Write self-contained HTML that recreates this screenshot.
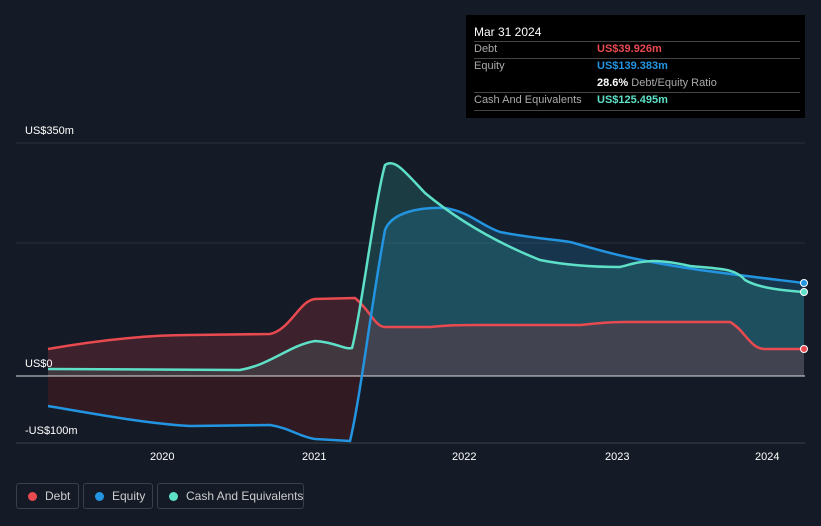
<!DOCTYPE html>
<html><head><style>
body{margin:0;background:#151b26;font-family:"Liberation Sans",sans-serif;width:821px;height:526px;overflow:hidden;position:relative}
.tt{position:absolute;left:466px;top:15px;width:339px;height:103px;background:#000;color:#fff;font-size:11px}
.tt .r{position:absolute;left:8px;width:326px;border-top:1px solid #444}
.lbl{color:#aaa}
.leg{position:absolute;top:483px;height:26px;border:1px solid #3a404a;border-radius:3px;color:#ccc;font-size:12px;line-height:24px;box-sizing:border-box;white-space:nowrap}
.leg i{position:absolute;top:8px;left:11px;width:9px;height:9px;border-radius:50%}
.ax{position:absolute;color:#fff;font-size:11px}
</style></head><body>
<svg width="821" height="526" style="position:absolute;left:0;top:0">
<defs>
<clipPath id="up"><rect x="0" y="0" width="821" height="376"/></clipPath>
<clipPath id="dn"><rect x="0" y="376" width="821" height="150"/></clipPath>
</defs>
<line x1="16" y1="143" x2="805" y2="143" stroke="#2c323c"/>
<line x1="16" y1="243" x2="805" y2="243" stroke="#2c323c"/>
<line x1="16" y1="443" x2="805" y2="443" stroke="#3a404a"/>
<g clip-path="url(#dn)">
<path d="M48,406 C100,415 150,424 190,426 L270,425 C290,428 300,437 315,439 L350,441 C360,400 372,300 385,230 L385,376 L48,376Z" fill="#3a1a22" fill-opacity="0.8"/>
</g>
<g clip-path="url(#up)">
<path d="M48,406 C100,415 150,424 190,426 L270,425 C290,428 300,437 315,439 L350,441 C360,400 372,300 385,230 C392,212 420,207 445,208 C470,212 480,225 500,232 C530,238 560,240 570,242 C600,250 620,258 700,270 C760,278 780,280 804,283 L804,376 L48,376Z" fill="#1e6a9a" fill-opacity="0.35"/>
</g>
<path d="M48,369 L240,370 C270,365 290,345 315,341 C335,342 345,350 352,348 C360,320 375,200 385,165 C395,158 405,172 425,193 C460,222 500,244 540,260 C570,266 600,267 620,267 C640,262 650,257 690,266 C720,269 735,268 745,280 C760,289 790,291 804,292 L804,376 L48,376Z" fill="#2a8a88" fill-opacity="0.3"/>
<path d="M48,349 C100,340 150,335 190,335 L270,334 C290,330 300,300 315,299 L355,298 C370,310 375,327 385,327 L430,327 C450,325 460,325 480,325 L580,325 C600,323 610,322 625,322 L730,322 C745,330 750,349 765,349 L804,349 L804,376 L48,376Z" fill="#8a2e3a" fill-opacity="0.35"/>
<line x1="16" y1="376" x2="805" y2="376" stroke="#ddd"/>
<path d="M48,349 C100,340 150,335 190,335 L270,334 C290,330 300,300 315,299 L355,298 C370,310 375,327 385,327 L430,327 C450,325 460,325 480,325 L580,325 C600,323 610,322 625,322 L730,322 C745,330 750,349 765,349 L804,349" fill="none" stroke="#e84a50" stroke-width="2.5"/>
<path d="M48,406 C100,415 150,424 190,426 L270,425 C290,428 300,437 315,439 L350,441 C360,400 372,300 385,230 C392,212 420,207 445,208 C470,212 480,225 500,232 C530,238 560,240 570,242 C600,250 620,258 700,270 C760,278 780,280 804,283" fill="none" stroke="#2394e0" stroke-width="2.5"/>
<path d="M48,369 L240,370 C270,365 290,345 315,341 C335,342 345,350 352,348 C360,320 375,200 385,165 C395,158 405,172 425,193 C460,222 500,244 540,260 C570,266 600,267 620,267 C640,262 650,257 690,266 C720,269 735,268 745,280 C760,289 790,291 804,292" fill="none" stroke="#5ee0c8" stroke-width="2.5"/>
<circle cx="804" cy="349" r="3.5" fill="#e84a50" stroke="#fff"/>
<circle cx="804" cy="283" r="3.5" fill="#2394e0" stroke="#fff"/>
<circle cx="804" cy="292" r="3.5" fill="#5ee0c8" stroke="#fff"/>
</svg>
<div class="ax" style="left:25px;top:125px">US$350m</div>
<div class="ax" style="left:25px;top:358px">US$0</div>
<div class="ax" style="left:25px;top:425px">-US$100m</div>
<div class="ax" style="left:150px;top:451px">2020</div>
<div class="ax" style="left:302px;top:451px">2021</div>
<div class="ax" style="left:452px;top:451px">2022</div>
<div class="ax" style="left:605px;top:451px">2023</div>
<div class="ax" style="left:755px;top:451px">2024</div>
<div class="tt">
<div style="position:absolute;left:8px;top:10px;font-size:12px">Mar 31 2024</div>
<div class="r" style="top:26px"></div>
<div class="lbl" style="position:absolute;left:8px;top:28px">Debt</div>
<div style="position:absolute;left:131px;top:28px;color:#e84a50;font-weight:bold">US$39.926m</div>
<div class="r" style="top:43px"></div>
<div class="lbl" style="position:absolute;left:8px;top:45px">Equity</div>
<div style="position:absolute;left:131px;top:45px;color:#2394e0;font-weight:bold">US$139.383m</div>
<div style="position:absolute;left:131px;top:62px"><b>28.6%</b> <span class="lbl">Debt/Equity Ratio</span></div>
<div class="r" style="top:77px"></div>
<div class="lbl" style="position:absolute;left:8px;top:79px">Cash And Equivalents</div>
<div style="position:absolute;left:131px;top:79px;color:#5ee0c8;font-weight:bold">US$125.495m</div>
<div class="r" style="top:95px"></div>
</div>
<div class="leg" style="left:16px;width:63px"><i style="background:#e84a50"></i><span style="margin-left:28px">Debt</span></div>
<div class="leg" style="left:83px;width:70px"><i style="background:#2394e0"></i><span style="margin-left:28px">Equity</span></div>
<div class="leg" style="left:157px;width:147px"><i style="background:#5ee0c8"></i><span style="margin-left:28px">Cash And Equivalents</span></div>
</body></html>
